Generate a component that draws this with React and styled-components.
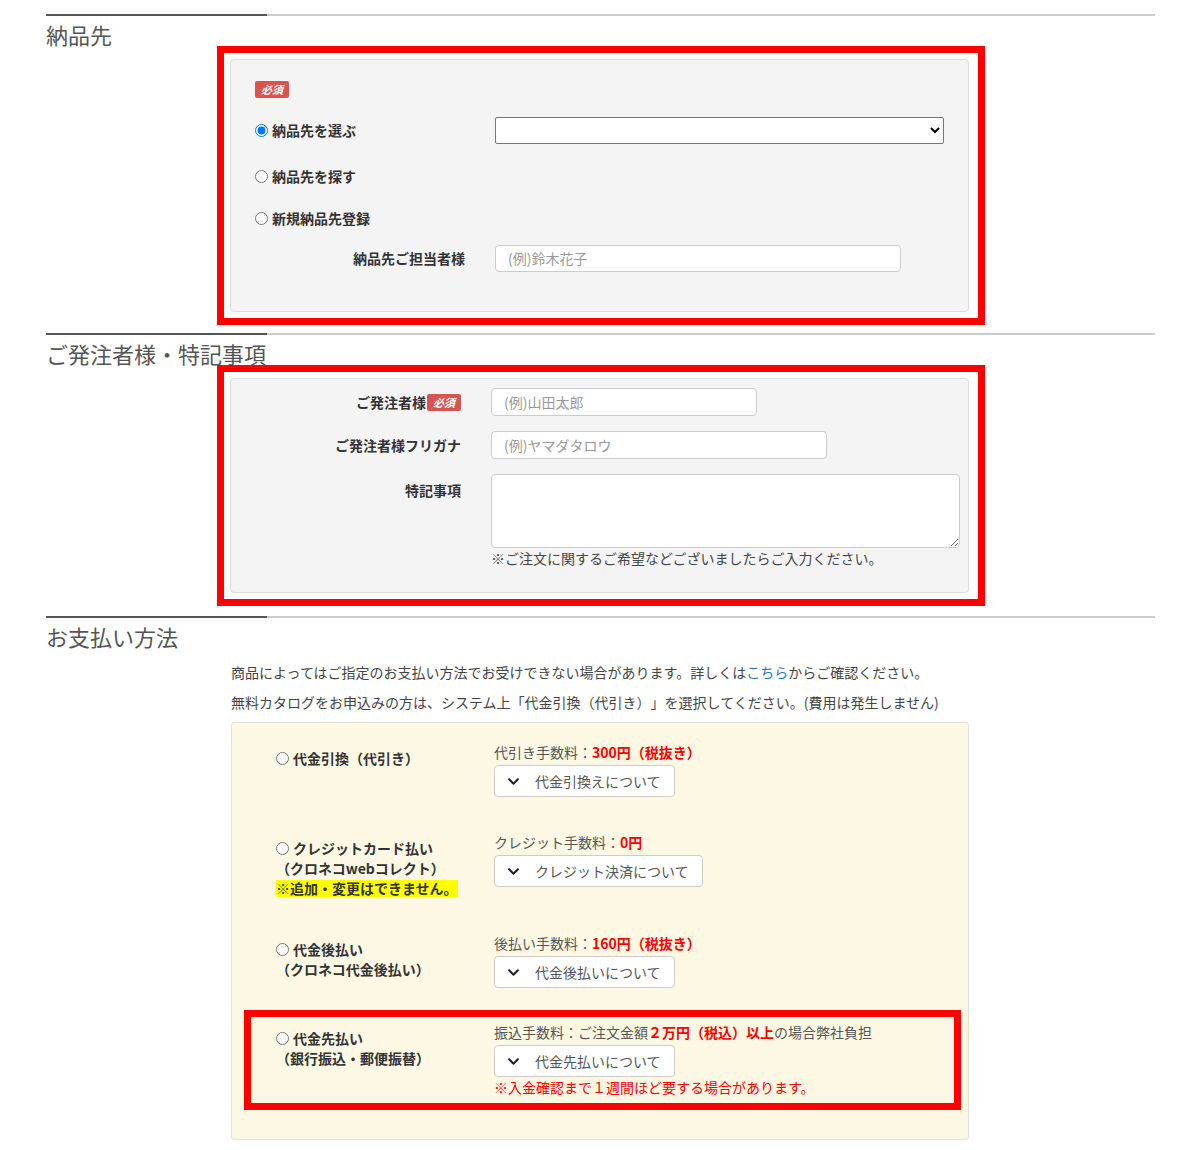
import styled, { createGlobalStyle } from 'styled-components';
import { FaChevronDown } from 'react-icons/fa';

const GlobalStyle = createGlobalStyle`
  * { box-sizing: border-box; }
  body {
    margin: 0;
    background: #fff;
    color: #333;
    font-family: "Noto Sans CJK JP", "Noto Sans", sans-serif;
    font-size: 14px;
    text-spacing-trim: space-all;
  }
`;

const Page = styled.div`
  width: 1109px;
  margin-left: 46px;
  padding: 14px 0 10px;
`;

const Section = styled.section`
  margin-bottom: ${(p) => p.$after || 0}px;
`;

const Rule = styled.div`
  height: 2px;
  background: linear-gradient(to right, #555 221px, #ccc 221px);
`;

const Heading = styled.h2`
  margin: 0 0 2px;
  padding-top: 8px;
  font-size: 22px;
  line-height: 20px;
  font-weight: 400;
  color: #555;
`;

/* red annotation frame round a panel */
const Marked = styled.div`
  width: 768px;
  margin-left: 171px;
  border: 7px solid #f00;
  padding: 6px 9px 6px 6px;
`;

const Panel = styled.div`
  background: #f4f4f4;
  border: 1px solid #ddd;
  border-radius: 4px;
  padding: ${(p) => p.$pad};
`;

const Badge = styled.span`
  display: inline-block;
  height: 17px;
  padding: 0 6px;
  line-height: 17px;
  background: #d9534f;
  color: #fff;
  font-size: 11px;
  font-weight: 700;
  font-style: italic;
  border-radius: 2px;
  margin-left: ${(p) => p.$ml || 0}px;
`;

const BadgeRow = styled.div`
  height: 17px;
  margin-bottom: 7px;
  display: flex;
`;

const PickGrid = styled.div`
  display: grid;
  grid-template-columns: 210px 1fr;
  grid-template-rows: 50px 42px 42px 38px;
  column-gap: 30px;
  align-items: center;
`;

const FormGrid = styled.div`
  display: grid;
  grid-template-columns: 206px 1fr;
  column-gap: 30px;
  row-gap: 15px;
`;

const RadioLabel = styled.label`
  grid-column: 1;
  display: flex;
  align-items: center;
  font-weight: 700;
  line-height: 20px;
  color: #333;
`;

const Radio = styled.input.attrs({ type: 'radio' })`
  width: 13px;
  height: 13px;
  margin: 0 4px 0 0;
  flex: none;
`;

const FieldLabel = styled.div`
  grid-column: 1;
  display: flex;
  justify-content: flex-end;
  align-items: center;
  align-self: ${(p) => (p.$top ? 'start' : 'center')};
  padding-top: ${(p) => (p.$top ? 6 : 0)}px;
  font-weight: 700;
  line-height: 20px;
  color: #333;
`;

const Select = styled.select`
  display: block;
  width: 449px;
  height: 27px;
  border: 1px solid #767676;
  border-radius: 2px;
  background: #fff;
  font: inherit;
`;

const TextInput = styled.input`
  display: block;
  width: ${(p) => p.$w}px;
  height: ${(p) => p.$h || 28}px;
  padding: 0 12px;
  border: 1px solid #ccc;
  border-radius: 4px;
  background: #fff;
  font: inherit;
  font-size: 14px;
  color: #333;
  &::placeholder {
    color: #999;
  }
`;

const TextArea = styled.textarea`
  display: block;
  width: 469px;
  height: 74px;
  padding: 6px 12px;
  border: 1px solid #ccc;
  border-radius: 4px;
  background: #fff;
  font: inherit;
`;

const Hint = styled.div`
  line-height: 20px;
  color: #444;
`;

const Intro = styled.div`
  margin-left: 185px;
  padding-top: 9px;
`;

const Para = styled.p`
  margin: 0;
  line-height: 30px;
  color: #444;
`;

const Link = styled.a`
  color: #2a7ab8;
  text-decoration: none;
`;

const PayBox = styled.div`
  width: 738px;
  margin: 5px 0 0 185px;
  background: #fcf8e3;
  border: 1px solid #e4e1d6;
  border-radius: 3px;
  padding: 6px 0 29px;
  display: flex;
  flex-direction: column;
  gap: 22px;
`;

const PayFrame = styled.div`
  margin: 0 7px 0 12px;
  border: 7px solid #f00;
  padding: 5px 0 6px;
`;

const PayRow = styled.div`
  display: grid;
  grid-template-columns: 218px 1fr;
  padding: ${(p) => (p.$flush ? '0 0 0 25px' : '13px 0 0 44px')};
`;

const PayName = styled.div`
  padding-top: 6px;
  font-weight: 700;
  line-height: 20px;
  color: #333;
  input {
    vertical-align: -1px;
  }
`;

const Caution = styled.span`
  display: inline-block;
  line-height: 17px;
  background: #ff0;
`;

const PayInfo = styled.div`
  line-height: 20px;
  color: #555;
`;

const Red = styled.span`
  color: #f00;
  font-weight: ${(p) => (p.$light ? 400 : 700)};
`;

const InfoButton = styled.button`
  display: flex;
  align-items: center;
  gap: 15px;
  height: 32px;
  margin-top: 3px;
  padding: 0 13px 0 12px;
  background: #fff;
  border: 1px solid #ccc;
  border-radius: 4px;
  font: inherit;
  font-size: 14px;
  color: #555;
  svg {
    color: #222;
  }
`;

const payments = [
  {
    name: ['代金引換（代引き）'],
    fee: (
      <>
        代引き手数料：<Red>300円（税抜き）</Red>
      </>
    ),
    button: '代金引換えについて',
  },
  {
    name: ['クレジットカード払い', '（クロネコwebコレクト）'],
    caution: '※追加・変更はできません。',
    fee: (
      <>
        クレジット手数料：<Red>0円</Red>
      </>
    ),
    button: 'クレジット決済について',
  },
  {
    name: ['代金後払い', '（クロネコ代金後払い）'],
    fee: (
      <>
        後払い手数料：<Red>160円（税抜き）</Red>
      </>
    ),
    button: '代金後払いについて',
  },
  {
    name: ['代金先払い', '（銀行振込・郵便振替）'],
    fee: (
      <>
        振込手数料：ご注文金額<Red>２万円（税込）以上</Red>の場合弊社負担
      </>
    ),
    button: '代金先払いについて',
    note: '※入金確認まで１週間ほど要する場合があります。',
    marked: true,
  },
];

const PaymentRow = ({ item, flush }) => (
  <PayRow $flush={flush}>
    <PayName>
      <Radio name="pay" />
      {item.name[0]}
      {item.name.slice(1).map((line) => (
        <div key={line}>{line}</div>
      ))}
      {item.caution && <Caution>{item.caution}</Caution>}
    </PayName>
    <PayInfo>
      <div>{item.fee}</div>
      <InfoButton type="button">
        <FaChevronDown size={13} />
        {item.button}
      </InfoButton>
      {item.note && <Red $light>{item.note}</Red>}
    </PayInfo>
  </PayRow>
);

export default function App() {
  return (
    <Page>
      <GlobalStyle />

      <Section $after={8}>
        <Rule />
        <Heading>納品先</Heading>
        <Marked>
          <Panel $pad="21px 24px 34px">
            <BadgeRow>
              <Badge>必須</Badge>
            </BadgeRow>
            <PickGrid>
              <RadioLabel>
                <Radio name="dest" defaultChecked />
                納品先を選ぶ
              </RadioLabel>
              <Select>
                <option></option>
              </Select>
              <RadioLabel>
                <Radio name="dest" />
                納品先を探す
              </RadioLabel>
              <RadioLabel>
                <Radio name="dest" />
                新規納品先登録
              </RadioLabel>
              <FieldLabel>納品先ご担当者様</FieldLabel>
              <TextInput $w={406} $h={27} placeholder="(例)鈴木花子" />
            </PickGrid>
          </Panel>
        </Marked>
      </Section>

      <Section $after={10}>
        <Rule />
        <Heading>ご発注者様・特記事項</Heading>
        <Marked>
          <Panel $pad="9px 24px 24px">
            <FormGrid>
              <FieldLabel>
                ご発注者様<Badge $ml={1}>必須</Badge>
              </FieldLabel>
              <TextInput $w={266} placeholder="(例)山田太郎" />
              <FieldLabel>ご発注者様フリガナ</FieldLabel>
              <TextInput $w={336} placeholder="(例)ヤマダタロウ" />
              <FieldLabel $top>特記事項</FieldLabel>
              <div>
                <TextArea />
                <Hint>※ご注文に関するご希望などございましたらご入力ください。</Hint>
              </div>
            </FormGrid>
          </Panel>
        </Marked>
      </Section>

      <Section>
        <Rule />
        <Heading>お支払い方法</Heading>
        <Intro>
          <Para>
            商品によってはご指定のお支払い方法でお受けできない場合があります。詳しくは
            <Link href="#">こちら</Link>からご確認ください。
          </Para>
          <Para>
            無料カタログをお申込みの方は、システム上「代金引換（代引き）」を選択してください。(費用は発生しません)
          </Para>
        </Intro>
        <PayBox>
          {payments.map((item) =>
            item.marked ? (
              <PayFrame key={item.button}>
                <PaymentRow item={item} flush />
              </PayFrame>
            ) : (
              <PaymentRow key={item.button} item={item} />
            )
          )}
        </PayBox>
      </Section>
    </Page>
  );
}
